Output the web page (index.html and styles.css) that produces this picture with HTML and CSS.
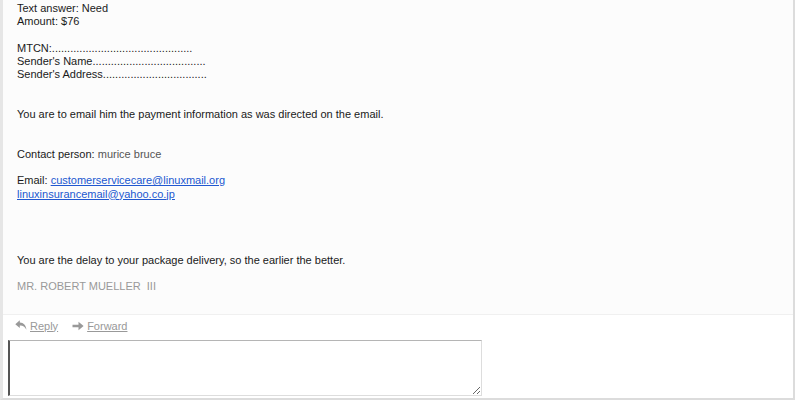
FILE: index.html
```html
<!DOCTYPE html>
<html>
<head>
<meta charset="utf-8">
<link rel="stylesheet" href="styles.css">
</head>
<body>
<div class="panel">
  <div class="message">
    <p class="line">Text answer: Need</p>
    <p class="line">Amount: $76</p>
    <p class="line blank">&nbsp;</p>
    <p class="line">MTCN:..............................................</p>
    <p class="line">Sender's Name.....................................</p>
    <p class="line">Sender's Address..................................</p>
    <p class="line blank">&nbsp;</p>
    <p class="line blank">&nbsp;</p>
    <p class="line">You are to email him the payment information as was directed on the email.</p>
    <p class="line blank">&nbsp;</p>
    <p class="line blank">&nbsp;</p>
    <p class="line">Contact person: <span class="name">murice bruce</span></p>
    <p class="line blank">&nbsp;</p>
    <p class="line">Email: <a class="mail" href="#">customerservicecare@linuxmail.org</a></p>
    <p class="line"><a class="mail" href="#">linuxinsurancemail@yahoo.co.jp</a></p>
    <p class="line blank">&nbsp;</p>
    <p class="line blank">&nbsp;</p>
    <p class="line blank">&nbsp;</p>
    <p class="line blank">&nbsp;</p>
    <p class="line">You are the delay to your package delivery, so the earlier the better.</p>
    <p class="line blank">&nbsp;</p>
    <p class="line signature">MR. ROBERT MUELLER&nbsp; III</p>
  </div>
  <div class="actions">
    <a class="action" href="#">
      <svg class="icon" width="12" height="11" viewBox="0 0 12 11"><path d="M4.8 0.3 L0.3 4.2 L4.8 8.1 L4.8 5.6 C7.7 5.4 9.7 6.5 11.4 9.8 C11 5.3 8.7 2.8 4.8 2.6 Z" fill="#999"/></svg>
      <span class="label">Reply</span>
    </a>
    <a class="action" href="#">
      <svg class="icon" width="12" height="10" viewBox="0 0 12 10"><path d="M0.5 3.7 L6.5 3.7 L6.5 0.8 L11.6 5 L6.5 9.2 L6.5 6.3 L0.5 6.3 Z" fill="#999"/></svg>
      <span class="label">Forward</span>
    </a>
  </div>
  <div class="reply-box">
    <textarea class="reply-input"></textarea>
  </div>
</div>
</body>
</html>
```

FILE: styles.css
```css
html, body {
  margin: 0;
  padding: 0;
  background: #ffffff;
}

body {
  font-family: "Liberation Sans", Arial, sans-serif;
  font-size: 11px;
  color: #1a1a1a;
}

.panel {
  width: 790px;
  height: 398px;
  border-left: 3px solid #e6e6e6;
  border-right: 2px solid #dcdcdc;
  border-bottom: 2px solid #dcdcdc;
  display: flex;
  flex-direction: column;
}

.message {
  background: #fcfcfc;
  height: 315px;
  box-sizing: border-box;
  padding: 2px 14px 0;
  border-bottom: 1px solid #f0f0f0;
}

.line {
  margin: 0;
  line-height: 13.25px;
  white-space: nowrap;
}

.name {
  color: #555555;
}

.mail {
  color: #2158d0;
  text-decoration: underline;
}

.signature {
  color: #999999;
}

.actions {
  display: flex;
  gap: 14px;
  padding: 3px 0 0 12px;
  height: 22px;
  box-sizing: border-box;
}

.action {
  display: flex;
  align-items: center;
  gap: 3px;
  height: 15px;
  color: #999999;
  text-decoration: none;
}

.label {
  text-decoration: underline;
}

.reply-box {
  padding: 3px 0 0 5px;
}

.reply-input {
  display: block;
  width: 474px;
  height: 56px;
  box-sizing: border-box;
  margin: 0;
  border: 1px solid #dddddd;
  border-top-color: #b5b5b5;
  border-left: 2px solid #555555;
  background: #ffffff;
  resize: both;
}
```
